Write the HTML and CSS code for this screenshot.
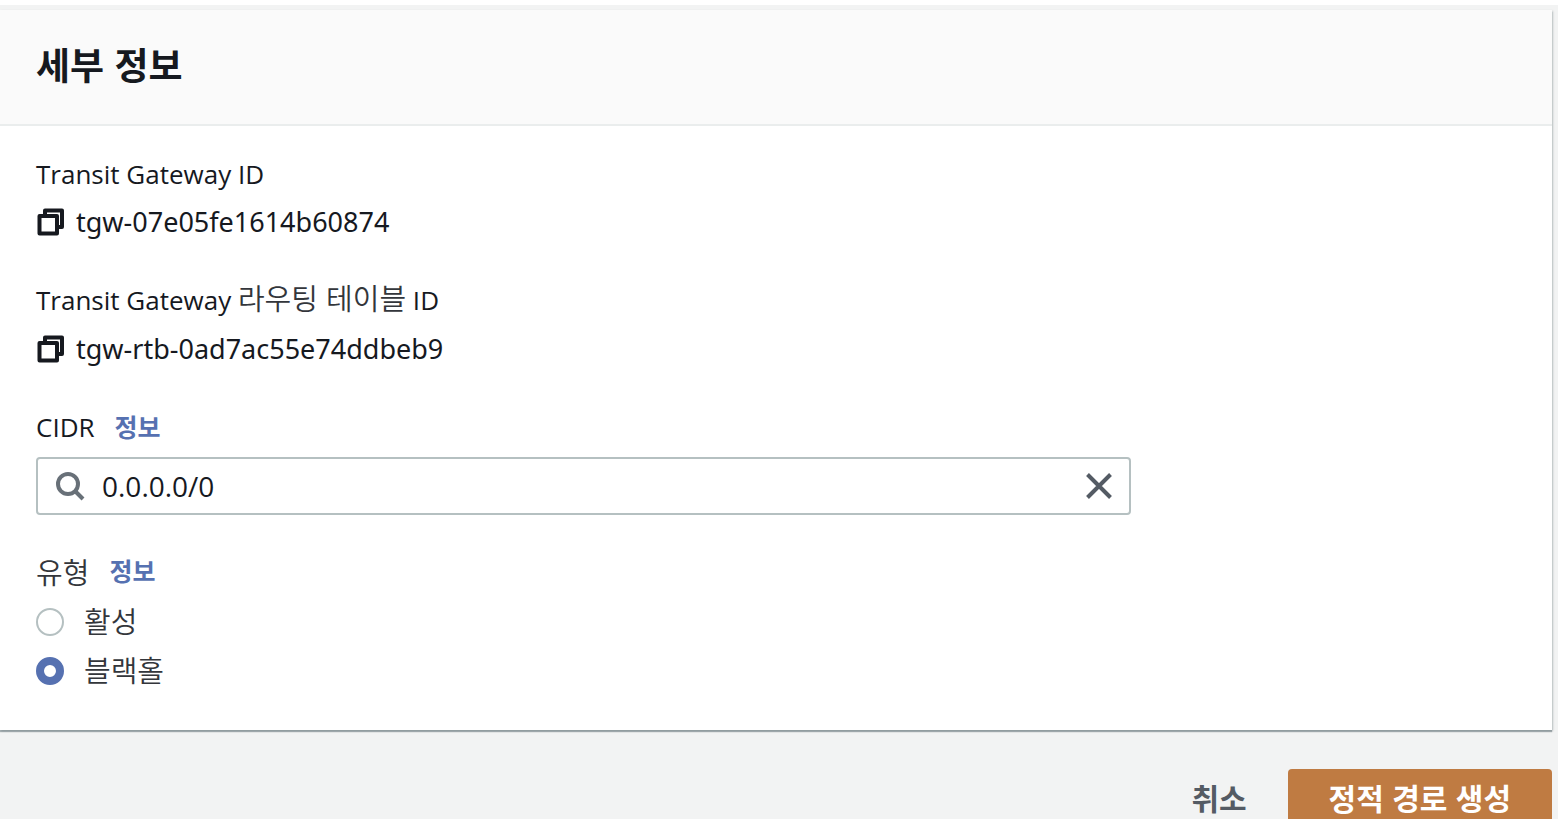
FILE: index.html
```
<!DOCTYPE html>
<html lang="ko">
<head>
    <meta charset="UTF-8">
    <meta name="viewport" content="width=device-width, initial-scale=1.0">
    <title>정적 경로 생성</title>
    <link rel="stylesheet" href="styles.css">
</head>
<body>

    <form class="route-form">
        <section class="card">
            <header class="card-header">
                <h2>세부 정보</h2>
            </header>

            <div class="card-body">
                <dl class="detail">
                    <dt>Transit Gateway ID</dt>
                    <dd>
                        <button type="button" class="copy-btn" aria-label="복사">
                            <svg viewBox="0 0 28 28" width="28" height="28" fill="none" stroke="currentColor" stroke-width="4" stroke-linejoin="round">
                                <path d="M9 8V2.5H26V19H21"/>
                                <path d="M3.5 8H21V25.5H3.5Z"/>
                            </svg>
                        </button>
                        <span>tgw-07e05fe1614b60874</span>
                    </dd>
                </dl>

                <dl class="detail">
                    <dt>Transit Gateway <span class="ko">라우팅 테이블</span> ID</dt>
                    <dd>
                        <button type="button" class="copy-btn" aria-label="복사">
                            <svg viewBox="0 0 28 28" width="28" height="28" fill="none" stroke="currentColor" stroke-width="4" stroke-linejoin="round">
                                <path d="M9 8V2.5H26V19H21"/>
                                <path d="M3.5 8H21V25.5H3.5Z"/>
                            </svg>
                        </button>
                        <span>tgw-rtb-0ad7ac55e74ddbeb9</span>
                    </dd>
                </dl>

                <div class="field">
                    <div class="field-label">
                        <label for="cidr">CIDR</label>
                        <a href="#" class="info-link">정보</a>
                    </div>
                    <div class="search-box">
                        <svg class="search-icon" viewBox="0 0 30 30" width="30" height="30" fill="none" stroke="currentColor" stroke-width="4">
                            <circle cx="12" cy="13" r="10"/>
                            <path d="M19 20L27 28"/>
                        </svg>
                        <input type="text" id="cidr" value="0.0.0.0/0">
                        <button type="button" class="clear-btn" aria-label="지우기">
                            <svg viewBox="0 0 28 28" width="28" height="28" fill="none" stroke="currentColor" stroke-width="4">
                                <path d="M2.5 2.5L25.5 25.5M25.5 2.5L2.5 25.5"/>
                            </svg>
                        </button>
                    </div>
                </div>

                <div class="field" role="radiogroup" aria-labelledby="typeLabel">
                    <div class="field-label">
                        <span id="typeLabel" class="ko">유형</span>
                        <a href="#" class="info-link">정보</a>
                    </div>
                    <label class="radio"><input type="radio" name="type" value="active"><span class="ko">활성</span></label>
                    <label class="radio"><input type="radio" name="type" value="blackhole" checked><span class="ko">블랙홀</span></label>
                </div>
            </div>
        </section>

        <div class="actions">
            <button type="button" class="btn btn-link">취소</button>
            <button type="submit" class="btn btn-primary">정적 경로 생성</button>
        </div>
    </form>

</body>
</html>
```
FILE: styles.css
```
:root {
    --text: #16191f; --text-medium: #545b64; --gray: #687078;
    --border: #b5c0c1; --line: #eaeded; --page: #f2f3f3;
    --blue: #5671b1; --orange: #bf7b42;
}
* { box-sizing: border-box; }
body {
    font-family: "Open Sans", "Noto Sans CJK KR", sans-serif;
    font-size: 26px; line-height: 44px; margin: 0; color: var(--text);
    background-color: var(--page); border-top: 5px solid #fff;
    height: 100vh; overflow: hidden;
}
button { font-family: inherit; cursor: pointer; border: none; background: none; padding: 0; }
.ko {
    font-family: "Noto Sans CJK KR", sans-serif; font-size: 29px; line-height: 32px;
    font-weight: 350; color: #33363b;
}

/* Card */
.route-form { padding: 5px 6px 0 0; }
.card {
    background-color: #fff;
    box-shadow: 0 2px 1px rgba(0, 28, 36, 0.3), 1px 1px 2px rgba(0, 28, 36, 0.2);
}
.card-header {
    background-color: #fafafa; border-bottom: 2px solid var(--line);
    padding: 28px 36px 34px;
}
.card-header h2 {
    margin: 0; font-family: "Noto Sans CJK KR", sans-serif;
    font-size: 37px; line-height: 52px; font-weight: 700;
}
.card-body { padding: 26px 36px 35px; }

.detail { margin: 0 0 30px; }
.detail dd {
    display: flex; align-items: center; gap: 12px; margin: 0;
    font-family: "Noto Sans", sans-serif; font-size: 27px; line-height: 52px;
}
.detail + .detail dd { padding-top: 1px; }
.copy-btn { display: flex; color: var(--text); }

/* Fields */
.field + .field { margin-top: 34px; }
.field-label { display: flex; align-items: center; gap: 20px; margin-bottom: 4px; }
.info-link { color: var(--blue); font-size: 25px; font-weight: 700; text-decoration: none; }
.search-box {
    display: flex; align-items: center; gap: 16px; width: 74%; height: 58px;
    margin-top: 8px; padding: 0 16px 0 18px; border: 2px solid var(--border); border-radius: 4px;
}
.search-box input {
    flex: 1; min-width: 0; border: none; outline: none; padding: 0;
    font: inherit; font-size: 28px; color: inherit; background: none;
}
.search-icon { color: var(--gray); }
.clear-btn { display: flex; color: var(--text-medium); }

.radio { display: flex; align-items: center; gap: 20px; height: 49px; }
.radio .ko { padding-bottom: 4px; }
.radio input {
    appearance: none; width: 28px; height: 28px; margin: 0;
    border: 2px solid var(--border); border-radius: 50%; background-color: #fff;
}
.radio input:checked { border: 8px solid var(--blue); }

/* Footer buttons */
.actions { display: flex; justify-content: flex-end; margin-top: 39px; }
.btn {
    font-family: "Noto Sans CJK KR", sans-serif;
    font-size: 30px; line-height: 56px; font-weight: 700; padding: 0 41px; border-radius: 4px;
}
.btn-link { color: var(--text-medium); }
.btn-primary { background-color: var(--orange); color: #fff; }
```
